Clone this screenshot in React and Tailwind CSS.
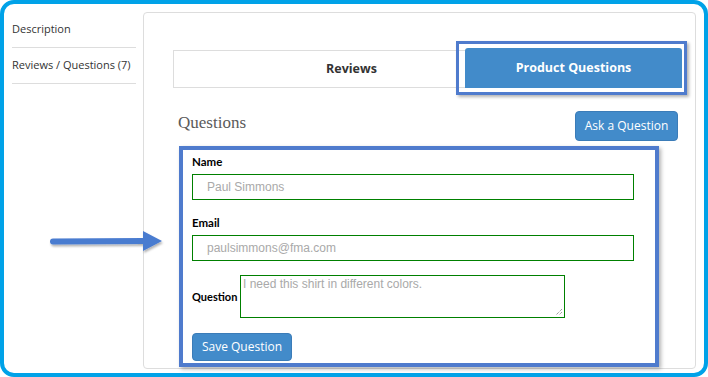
import React from "react";

export default function App() {
  return (
    <div className="relative w-[708px] h-[377px] bg-white overflow-hidden">
      <div className="absolute inset-0 border-[4px] border-[#00a2e8] rounded-[14px] pointer-events-none z-20" />
      <div className="flex w-full h-full pt-[12px] pl-[12px]">
        {/* Left nav */}
        <div className="w-[124px] shrink-0 font-['Open_Sans',sans-serif] text-[11px] text-[#333]">
          <div className="h-[36px] border-b border-[#ddd] flex items-center">Description</div>
          <div className="h-[36px] border-b border-[#ddd] flex items-center">Reviews / Questions (7)</div>
        </div>
        {/* Main panel */}
        <div className="ml-[7px] w-[553px] h-[357px] border border-[#ddd] rounded-[4px] pt-[37px] pl-[29px] relative">
          {/* Tabs */}
          <div className="flex w-[509px] h-[38px] relative">
            <div className="w-[292px] h-[38px] border border-r-0 border-[#ddd] flex items-center pl-[152px] font-['Open_Sans',sans-serif] font-bold text-[12.5px] text-[#333]">
              Reviews
            </div>
            <div className="w-[217px] h-[40px] -mt-[2px] bg-[#428bca] rounded-t-[3px] flex items-center justify-center font-['Open_Sans',sans-serif] font-bold text-[12.5px] text-white">
              Product Questions
            </div>
            <div className="absolute left-[283px] top-[-9px] w-[231px] h-[54px] border-[3px] border-[#4f7bcd] shadow-[2px_2px_3px_rgba(0,0,0,0.3)] pointer-events-none" />
          </div>
          {/* Questions header */}
          <div className="flex items-start justify-between w-[505px] mt-[23px]">
            <div className="pl-[5px] mt-[1px] font-['Liberation_Serif',serif] text-[17px] leading-[22px] text-[#5a5a5a]">Questions</div>
            <button className="h-[30px] w-[103px] bg-[#428bca] rounded-[4px] border border-[#3b7cb8] text-white font-['Open_Sans',sans-serif] text-[12px]">
              Ask a Question
            </button>
          </div>
          {/* Form frame */}
          <div className="ml-[6px] mt-[5px] w-[480px] border-[4px] border-[#4f7bcd] shadow-[2px_2px_4px_rgba(0,0,0,0.3)] pl-[9px] pt-[5px] pb-[2px] bg-white">
            <div className="font-['Lato',sans-serif] font-bold text-[11.5px] leading-[14px] text-black">Name</div>
            <div className="mt-[5px] w-[442px] h-[26px] border border-[#008000] flex items-center pl-[14px] font-['Liberation_Sans',sans-serif] text-[12px] text-[#a9a9a9]">
              Paul Simmons
            </div>
            <div className="mt-[16px] font-['Lato',sans-serif] font-bold text-[11.5px] leading-[14px] text-black">Email</div>
            <div className="mt-[5px] w-[442px] h-[26px] border border-[#008000] flex items-center pl-[14px] font-['Liberation_Sans',sans-serif] text-[12px] text-[#a9a9a9]">
              paulsimmons@fma.com
            </div>
            <div className="mt-[14px] flex items-center gap-[3px]">
              <div className="w-[45px] font-['Lato',sans-serif] font-bold text-[11px] leading-[14px] text-black whitespace-nowrap">Question</div>
              <div className="relative w-[325px] h-[43px] border border-[#008000] pl-[2px] pt-[1px] font-['Liberation_Sans',sans-serif] text-[12px] leading-[14px] text-[#a9a9a9]">
                I need this shirt in different colors.
                <svg className="absolute right-[1px] bottom-[1px]" width="9" height="9" viewBox="0 0 9 9">
                  <path d="M8 2 L2 8 M8 5 L5 8" stroke="#777" strokeWidth="1" strokeDasharray="1 1" fill="none" />
                </svg>
              </div>
            </div>
            <button className="mt-[15px] h-[28px] w-[100px] bg-[#428bca] rounded-[4px] border border-[#3b7cb8] text-white font-['Open_Sans',sans-serif] text-[12px]">
              Save Question
            </button>
          </div>
        </div>
      </div>
      {/* Arrow */}
      <svg className="absolute left-[45px] top-[226px]" width="125" height="32" viewBox="0 0 125 32">
        <defs>
          <filter id="sh" x="-10%" y="-30%" width="120%" height="180%">
            <feDropShadow dx="1" dy="2" stdDeviation="1.2" floodColor="#000" floodOpacity="0.3" />
          </filter>
        </defs>
        <g filter="url(#sh)">
          <path d="M8 12.5 L98 12 L98 5 L117 15 L98 25 L98 18 L8 18.5 A3 3 0 0 1 8 12.5 Z" fill="#4a7bd0" />
        </g>
      </svg>
    </div>
  );
}
